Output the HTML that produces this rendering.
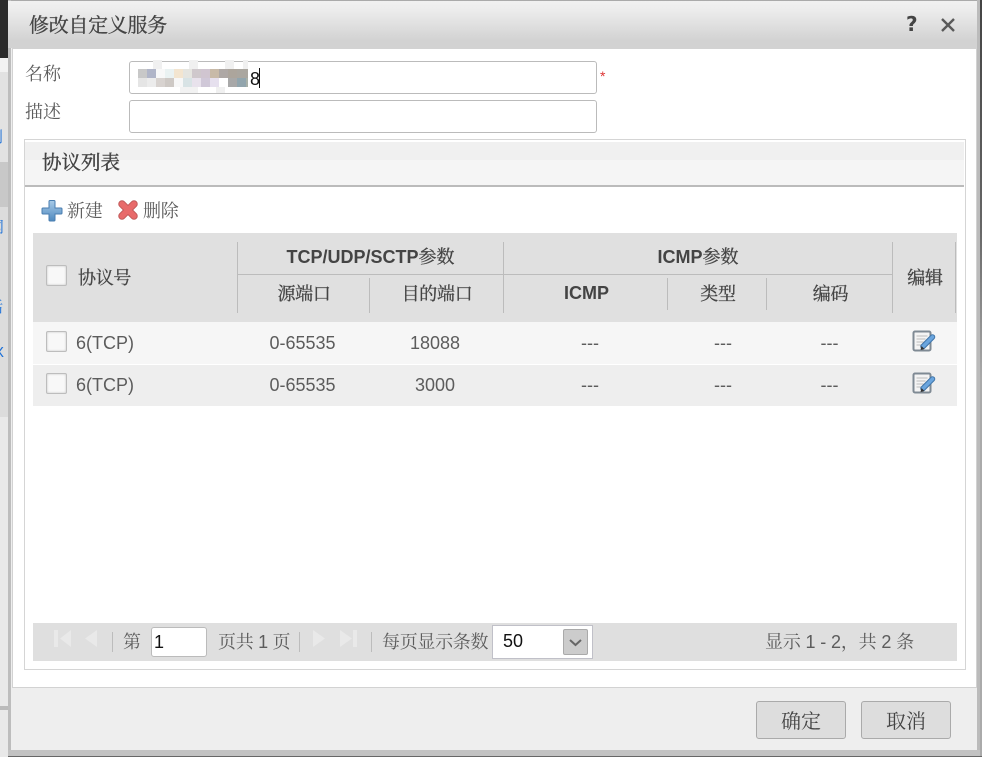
<!DOCTYPE html>
<html><head><meta charset="utf-8"><style>
html,body{margin:0;padding:0;width:982px;height:757px;overflow:hidden;background:#fff}
body{position:relative;font-family:"Liberation Sans","Noto Serif CJK SC",serif;color:#5c5c5c}
.a{position:absolute}
.t{position:absolute;white-space:nowrap;line-height:20px;font-size:18px}
.c{text-align:center}
.b{color:#444;-webkit-text-stroke:.3px #444}
.l{font-weight:bold;-webkit-text-stroke:0}
.cb{position:absolute;left:46px;width:21px;height:21px;box-sizing:border-box;background:#f8f8f8;border:1px solid #bdbdbd;box-shadow:inset 0 0 2px #c4c4c4;border-radius:2px}
.v{position:absolute;width:1px;background:#bcbcbc}
.m{position:absolute;width:9px;height:9px}
</style></head><body>
<!-- page behind -->
<div class="a" style="left:0;top:0;width:8px;height:757px;background:#e4e4e4"></div>
<div class="a" style="left:0;top:0;width:8px;height:58px;background:#2b2b2b"></div>
<div class="a" style="left:0;top:58px;width:8px;height:14px;background:#f2f2f2"></div>
<div class="a" style="left:0;top:72px;width:8px;height:90px;background:#e2e2e2"></div>
<div class="a" style="left:0;top:162px;width:8px;height:45px;background:#c8c8c8"></div>
<div class="a" style="left:0;top:207px;width:8px;height:210px;background:#dcdcdc"></div>
<div class="a" style="left:0;top:417px;width:8px;height:340px;background:#e9e9e9"></div>
<div class="a" style="left:0;top:706px;width:8px;height:4px;background:#bbb"></div>
<div class="t" style="left:-12px;top:128px;color:#1a6fd8;font-size:15px">列</div>
<div class="t" style="left:-11px;top:218px;color:#1a6fd8;font-size:15px">网</div>
<div class="t" style="left:-12px;top:298px;color:#1a6fd8;font-size:15px">话</div>
<div class="t" style="left:-6px;top:343px;color:#1a6fd8;font-size:15px">X</div>
<!-- dialog -->
<div class="a" style="left:8px;top:0;width:974px;height:757px;background:#eee;border-top:1px solid #aaa;box-sizing:border-box"></div>
<div class="a" style="left:8px;top:0;width:3px;height:757px;background:#bdbdbd"></div>
<div class="a" style="left:977px;top:0;width:5px;height:757px;background:#bbb"></div>
<div class="a" style="left:980px;top:0;width:2px;height:757px;background:linear-gradient(#444,#666 30%,#aaa 50%,#aaa)"></div>
<div class="a" style="left:8px;top:1px;width:969px;height:47px;background:linear-gradient(#f1f1f1 0,#ececec 20%,#d2d2d2 85%,#d2d2d2)"></div>
<div class="a" style="left:8px;top:750px;width:972px;height:6px;background:#c2c2c2"></div>
<div class="a" style="left:8px;top:756px;width:974px;height:1px;background:#666"></div>
<div class="a" style="left:12px;top:48px;width:965px;height:640px;background:#fff;border:1px solid #d2d2d2;box-sizing:border-box"></div>
<div class="t" style="left:29px;top:16px;font-size:20px;letter-spacing:-.3px;color:#444;-webkit-text-stroke:.3px #444">修改自定义服务</div>
<div class="t" style="left:906px;top:14px;font-size:20px;color:#444;font-weight:bold;font-family:'DejaVu Sans',sans-serif">?</div>
<svg class="a" style="left:940px;top:17px" width="16" height="16" viewBox="0 0 16 16"><path d="M2 2L14 14M14 2L2 14" stroke="#5a5a5a" stroke-width="2.4"/></svg>
<!-- form -->
<div class="t" style="left:25px;top:64px">名称</div>
<div class="t" style="left:25px;top:102px">描述</div>
<div class="a" style="left:129px;top:61px;width:468px;height:33px;box-sizing:border-box;background:#fff;border:1px solid #bbb;border-radius:3px"></div>
<div class="a" style="left:129px;top:100px;width:468px;height:33px;box-sizing:border-box;background:#fff;border:1px solid #bbb;border-radius:3px"></div>
<div class="t" style="left:600px;top:66px;font-size:14px;color:#d33">*</div>
<!-- mosaic -->
<div class="m" style="left:153px;top:60px;background:#f0f0f0"></div><div class="m" style="left:189px;top:60px;background:#f0f0f0"></div><div class="m" style="left:225px;top:60px;background:#f0f0f0"></div><div class="m" style="left:243px;top:60px;width:5px;background:#f0f0f0"></div>
<div class="m" style="left:138px;top:69px;background:#c8c8c8"></div><div class="m" style="left:147px;top:69px;background:#b0b5c8"></div><div class="m" style="left:156px;top:69px;background:#f8f8f8"></div><div class="m" style="left:165px;top:69px;background:#eaf2f2"></div><div class="m" style="left:174px;top:69px;background:#f3e5d0"></div><div class="m" style="left:183px;top:69px;background:#e5e5e0"></div><div class="m" style="left:192px;top:69px;background:#cfc8cc"></div><div class="m" style="left:201px;top:69px;background:#d0c5d0"></div><div class="m" style="left:210px;top:69px;background:#c8baa8"></div><div class="m" style="left:219px;top:69px;background:#aea8a5"></div><div class="m" style="left:228px;top:69px;background:#aca59c"></div><div class="m" style="left:237px;top:69px;width:11px;background:#aaa69f"></div>
<div class="m" style="left:138px;top:78px;background:#e5e5e5"></div><div class="m" style="left:147px;top:78px;background:#ececec"></div><div class="m" style="left:156px;top:78px;background:#d8d3d0"></div><div class="m" style="left:165px;top:78px;background:#cec9c5"></div><div class="m" style="left:174px;top:78px;background:#f7f7f7"></div><div class="m" style="left:183px;top:78px;background:#d8e3e5"></div><div class="m" style="left:192px;top:78px;background:#e8e2ec"></div><div class="m" style="left:201px;top:78px;background:#d0c8d8"></div><div class="m" style="left:210px;top:78px;background:#e6e0ee"></div><div class="m" style="left:219px;top:78px;background:#fff"></div><div class="m" style="left:228px;top:78px;background:#a8a8a8"></div><div class="m" style="left:237px;top:78px;background:#92a5ad"></div><div class="m" style="left:246px;top:78px;width:2px;background:#a8b0a8"></div>
<div class="m" style="left:180px;top:87px;width:18px;height:6px;background:#f2f2f2"></div><div class="m" style="left:216px;top:87px;height:6px;background:#f0f0f0"></div>
<div class="t" style="left:250px;top:69px;color:#111">8</div>
<div class="a" style="left:259px;top:68px;width:1px;height:20px;background:#111"></div>
<!-- panel -->
<div class="a" style="left:24px;top:139px;width:942px;height:531px;box-sizing:border-box;border:1px solid #d5d5d5;background:#fff"></div>
<div class="a" style="left:25px;top:142px;width:939px;height:18px;background:#f0f0f0"></div>
<div class="a" style="left:25px;top:160px;width:939px;height:26px;background:#f5f5f5"></div>
<div class="a" style="left:25px;top:185px;width:939px;height:2px;background:#bbb"></div>
<div class="t" style="left:42px;top:153px;font-size:19.500px;color:#444;-webkit-text-stroke:.4px #444">协议列表</div>
<!-- toolbar -->
<svg class="a" style="left:41px;top:199px" width="22" height="23" viewBox="0 0 22 23"><defs><linearGradient id="g" x1="0" y1="0" x2="0" y2="1"><stop offset="0" stop-color="#a9cbe8"/><stop offset="1" stop-color="#4f89bf"/></linearGradient></defs><path d="M8 2.500Q8 1.500 9 1.500h4Q14 1.500 14 2.500V9h6q1 0 1 1v4q0 1-1 1h-6v6q0 1-1 1H9q-1 0-1-1v-6H2q-1 0-1-1v-4q0-1 1-1h6z" fill="url(#g)" stroke="#4a7eb0" stroke-width="1"/></svg>
<div class="t" style="left:67px;top:201px;letter-spacing:-.3px">新建</div>
<svg class="a" style="left:118px;top:200px" width="20" height="20" viewBox="0 0 20 20"><path d="M4 4L16 16M16 4L4 16" stroke="#c05a5a" stroke-width="7.500" stroke-linecap="round"/><path d="M4 4L16 16M16 4L4 16" stroke="#e86a6a" stroke-width="5.500" stroke-linecap="round"/></svg>
<div class="t" style="left:143px;top:201px;letter-spacing:-.3px">删除</div>
<!-- table -->
<div class="a" style="left:33px;top:233px;width:924px;height:89px;background:#e0e0e0"></div>
<div class="a" style="left:33px;top:322px;width:924px;height:42px;background:#f6f6f6"></div>
<div class="a" style="left:33px;top:365px;width:924px;height:41px;background:#eee"></div>
<div class="v" style="left:237px;top:242px;height:71px"></div>
<div class="v" style="left:503px;top:242px;height:71px"></div>
<div class="v" style="left:892px;top:242px;height:71px"></div>
<div class="v" style="left:955px;top:242px;height:71px"></div>
<div class="v" style="left:369px;top:278px;height:35px"></div>
<div class="v" style="left:667px;top:278px;height:32px"></div>
<div class="v" style="left:766px;top:278px;height:32px"></div>
<div class="a" style="left:237px;top:274px;width:656px;height:1px;background:#bcbcbc"></div>
<div class="cb" style="top:265px"></div>
<div class="cb" style="top:331px"></div>
<div class="cb" style="top:373px"></div>
<div class="t b" style="left:78px;top:268px;letter-spacing:-.3px">协议号</div>
<div class="t c b" style="left:237px;top:247px;width:267px"><span class="l">TCP/UDP/SCTP</span>参数</div>
<div class="t c b" style="left:503px;top:247px;width:390px"><span class="l">ICMP</span>参数</div>
<div class="t c b" style="left:238px;top:284px;width:132px;letter-spacing:-.3px">源端口</div>
<div class="t c b" style="left:369px;top:284px;width:136px;letter-spacing:-.3px">目的端口</div>
<div class="t c b l" style="left:504px;top:283px;width:165px">ICMP</div>
<div class="t c b" style="left:668px;top:284px;width:100px;letter-spacing:-.3px">类型</div>
<div class="t c b" style="left:767px;top:284px;width:127px;letter-spacing:-.3px">编码</div>
<div class="t c b" style="left:892px;top:268px;width:66px;letter-spacing:-.3px">编辑</div>
<div class="t" style="left:76px;top:333px">6(TCP)</div>
<div class="t" style="left:76px;top:375px">6(TCP)</div>
<div class="t c" style="left:237px;top:333px;width:131px">0-65535</div>
<div class="t c" style="left:237px;top:375px;width:131px">0-65535</div>
<div class="t c" style="left:369px;top:333px;width:132px">18088</div>
<div class="t c" style="left:369px;top:375px;width:132px">3000</div>
<div class="t c" style="left:504px;top:333px;width:172px">---</div>
<div class="t c" style="left:504px;top:375px;width:172px">---</div>
<div class="t c" style="left:667px;top:333px;width:112px">---</div>
<div class="t c" style="left:667px;top:375px;width:112px">---</div>
<div class="t c" style="left:766px;top:333px;width:127px">---</div>
<div class="t c" style="left:766px;top:375px;width:127px">---</div>
<svg class="a" style="left:912px;top:330px" width="24" height="24" viewBox="0 0 24 24"><rect x="1.500" y="1.500" width="17" height="19" rx="1.500" fill="#f4f4f4" stroke="#7f8a94" stroke-width="2"/><path d="M4.500 6h11M4.500 9h9M4.500 12h7M4.500 15h5" stroke="#bbb"/><path d="M11 16.500L20.500 7" stroke="#3f74a8" stroke-width="5.500" stroke-linecap="round"/><path d="M11 16.500L20.500 7" stroke="#6aa5de" stroke-width="3.500" stroke-linecap="round"/><path d="M8.500 20l1-4 3 3z" fill="#333"/></svg>
<svg class="a" style="left:912px;top:372px" width="24" height="24" viewBox="0 0 24 24"><rect x="1.500" y="1.500" width="17" height="19" rx="1.500" fill="#f4f4f4" stroke="#7f8a94" stroke-width="2"/><path d="M4.500 6h11M4.500 9h9M4.500 12h7M4.500 15h5" stroke="#bbb"/><path d="M11 16.500L20.500 7" stroke="#3f74a8" stroke-width="5.500" stroke-linecap="round"/><path d="M11 16.500L20.500 7" stroke="#6aa5de" stroke-width="3.500" stroke-linecap="round"/><path d="M8.500 20l1-4 3 3z" fill="#333"/></svg>
<!-- pager -->
<div class="a" style="left:33px;top:623px;width:924px;height:38px;background:#dfdfdf"></div>
<svg class="a" style="left:50px;top:628px" width="50" height="22" viewBox="0 0 50 22"><path d="M4 2h4v17H4zM21 2v17L10 10.500zM47 2v17L35 10.500z" fill="#e9e9e9"/></svg>
<div class="v" style="left:112px;top:632px;height:20px"></div>
<div class="t" style="left:123px;top:632px">第</div>
<div class="a" style="left:151px;top:627px;width:56px;height:30px;box-sizing:border-box;background:#fff;border:1px solid #bbb;border-radius:3px"></div>
<div class="t" style="left:154px;top:632px;color:#111">1</div>
<div class="t" style="left:218px;top:632px;letter-spacing:-.3px">页共 1 页</div>
<div class="v" style="left:299px;top:632px;height:20px"></div>
<svg class="a" style="left:310px;top:628px" width="50" height="22" viewBox="0 0 50 22"><path d="M3 2v17l12-8.500zM30 2v17l12-8.500zM43 2h4v17h-4z" fill="#e9e9e9"/></svg>
<div class="v" style="left:371px;top:632px;height:20px"></div>
<div class="t" style="left:382px;top:632px;letter-spacing:-.3px">每页显示条数</div>
<div class="a" style="left:492px;top:625px;width:101px;height:34px;box-sizing:border-box;background:#fff;border:1px solid #c0c0c8"></div>
<div class="t" style="left:503px;top:631px;color:#111">50</div>
<div class="a" style="left:563px;top:629px;width:25px;height:26px;box-sizing:border-box;background:#ccc;border:1px solid #aaa;border-radius:2px"></div>
<svg class="a" style="left:563px;top:629px" width="25" height="26" viewBox="0 0 25 26"><path d="M7 11l5.500 5 5.500-5" fill="none" stroke="#666" stroke-width="2"/></svg>
<div class="t" style="left:765px;top:632px;letter-spacing:-.15px">显示 1 - 2，共 2 条</div>
<!-- footer -->
<div class="a" style="left:756px;top:701px;width:90px;height:38px;box-sizing:border-box;background:#ddd;border:1px solid #aaa;border-radius:3px;text-align:center;line-height:40px;font-size:20px;color:#444">确定</div>
<div class="a" style="left:861px;top:701px;width:90px;height:38px;box-sizing:border-box;background:#ddd;border:1px solid #aaa;border-radius:3px;text-align:center;line-height:40px;font-size:20px;color:#444">取消</div>
</body></html>
